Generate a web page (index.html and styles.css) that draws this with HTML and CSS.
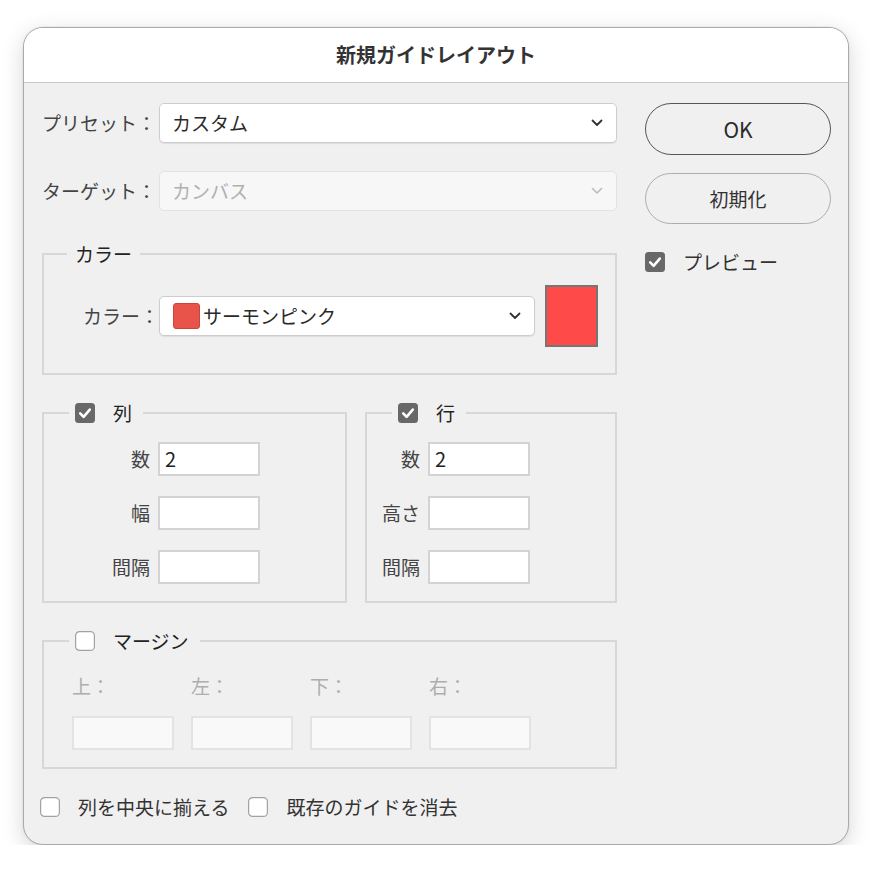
FILE: index.html
```html
<!DOCTYPE html>
<html lang="ja">
<head>
<meta charset="utf-8">
<title>新規ガイドレイアウト</title>
<link rel="stylesheet" href="styles.css">
</head>
<body>
<div class="window">
  <div class="titlebar">新規ガイドレイアウト</div>
  <div class="content">
    <div class="left">
      <div class="row">
        <span class="lbl">プリセット：</span>
        <div class="select">
          <span class="sel-text">カスタム</span>
          <svg class="chev" width="12" height="8" viewBox="0 0 12 8"><path d="M1.5 1.5 L6 6 L10.5 1.5" fill="none" stroke="#333" stroke-width="1.8" stroke-linecap="round" stroke-linejoin="round"/></svg>
        </div>
      </div>
      <div class="row row-target">
        <span class="lbl">ターゲット：</span>
        <div class="select disabled">
          <span class="sel-text">カンバス</span>
          <svg class="chev" width="12" height="8" viewBox="0 0 12 8"><path d="M1.5 1.5 L6 6 L10.5 1.5" fill="none" stroke="#bbb" stroke-width="1.6" stroke-linecap="round" stroke-linejoin="round"/></svg>
        </div>
      </div>

      <fieldset class="group group-color">
        <legend class="legend-text">カラー</legend>
        <div class="color-row">
          <span class="lbl lbl-color">カラー：</span>
          <div class="select select-color">
            <span class="mini-swatch"></span>
            <span class="sel-text">サーモンピンク</span>
            <svg class="chev" width="12" height="8" viewBox="0 0 12 8"><path d="M1.5 1.5 L6 6 L10.5 1.5" fill="none" stroke="#333" stroke-width="1.8" stroke-linecap="round" stroke-linejoin="round"/></svg>
          </div>
          <div class="big-swatch"></div>
        </div>
      </fieldset>

      <div class="pair">
        <fieldset class="group group-cols">
          <legend class="legend-check">
            <svg class="cb" width="20" height="20" viewBox="0 0 20 20"><rect width="20" height="20" rx="3.5" fill="#686868"/><path d="M5.2 10.4 L8.6 13.8 L14.8 6.6" fill="none" stroke="#fff" stroke-width="2.6" stroke-linecap="round" stroke-linejoin="round"/></svg>
            <span>列</span>
          </legend>
          <div class="fields">
            <div class="field"><span class="flbl">数</span><div class="input">2</div></div>
            <div class="field"><span class="flbl">幅</span><div class="input"></div></div>
            <div class="field"><span class="flbl">間隔</span><div class="input"></div></div>
          </div>
        </fieldset>
        <fieldset class="group group-rows">
          <legend class="legend-check">
            <svg class="cb" width="20" height="20" viewBox="0 0 20 20"><rect width="20" height="20" rx="3.5" fill="#686868"/><path d="M5.2 10.4 L8.6 13.8 L14.8 6.6" fill="none" stroke="#fff" stroke-width="2.6" stroke-linecap="round" stroke-linejoin="round"/></svg>
            <span>行</span>
          </legend>
          <div class="fields">
            <div class="field"><span class="flbl">数</span><div class="input">2</div></div>
            <div class="field"><span class="flbl">高さ</span><div class="input"></div></div>
            <div class="field"><span class="flbl">間隔</span><div class="input"></div></div>
          </div>
        </fieldset>
      </div>

      <fieldset class="group group-margin">
        <legend class="legend-check">
          <svg class="cb" width="20" height="20" viewBox="0 0 20 20"><rect x="0.6" y="0.6" width="18.8" height="18.8" rx="4" fill="#fff" stroke="#a2a2a2" stroke-width="1.2"/></svg>
          <span>マージン</span>
        </legend>
        <div class="margin-grid">
          <div class="mcol"><span class="mlbl">上：</span><div class="input input-dis"></div></div>
          <div class="mcol"><span class="mlbl">左：</span><div class="input input-dis"></div></div>
          <div class="mcol"><span class="mlbl">下：</span><div class="input input-dis"></div></div>
          <div class="mcol"><span class="mlbl">右：</span><div class="input input-dis"></div></div>
        </div>
      </fieldset>

      <div class="bottom">
        <svg class="cb" width="20" height="20" viewBox="0 0 20 20"><rect x="0.6" y="0.6" width="18.8" height="18.8" rx="4" fill="#fff" stroke="#a2a2a2" stroke-width="1.2"/></svg>
        <span class="blbl">列を中央に揃える</span>
        <svg class="cb cb-second" width="20" height="20" viewBox="0 0 20 20"><rect x="0.6" y="0.6" width="18.8" height="18.8" rx="4" fill="#fff" stroke="#a2a2a2" stroke-width="1.2"/></svg>
        <span class="blbl">既存のガイドを消去</span>
      </div>
    </div>

    <div class="right">
      <div class="btn btn-ok">OK</div>
      <div class="btn btn-reset">初期化</div>
      <div class="preview">
        <svg class="cb" width="20" height="20" viewBox="0 0 20 20"><rect width="20" height="20" rx="3.5" fill="#686868"/><path d="M5.2 10.4 L8.6 13.8 L14.8 6.6" fill="none" stroke="#fff" stroke-width="2.6" stroke-linecap="round" stroke-linejoin="round"/></svg>
        <span class="plbl">プレビュー</span>
      </div>
    </div>
  </div>
</div>
</body>
</html>
```
FILE: styles.css
```css
* { box-sizing: border-box; }
html, body {
  margin: 0;
  padding: 0;
  background: #ffffff;
}
body {
  font-family: "Noto Sans CJK JP", "Noto Sans", sans-serif;
  color: #3a3a3a;
  font-size: 19px;
}
.window {
  margin: 27px 0 0 23px;
  width: 826px;
  height: 818px;
  border: 1px solid #a9a9a9;
  border-radius: 20px;
  background: #f0f0f0;
  overflow: hidden;
  box-shadow: 0 6px 22px rgba(0, 0, 0, 0.16), 0 0 2px rgba(0,0,0,0.12);
}
.titlebar {
  height: 55px;
  background: #ffffff;
  border-bottom: 1px solid #c9c9c9;
  display: flex;
  align-items: center;
  justify-content: center;
  font-weight: 700;
  font-size: 20px;
  color: #333;
  padding-bottom: 2px;
}
.content {
  display: flex;
  padding: 20px 0 0 18px;
}
.left {
  width: 575px;
  display: flex;
  flex-direction: column;
}
.right {
  width: 186px;
  margin-left: 28px;
  display: flex;
  flex-direction: column;
}
.row {
  display: flex;
  align-items: center;
  height: 40px;
}
.row-target { margin-top: 28px; }
.lbl {
  width: 117px;
  flex: none;
  line-height: 24px;
  color: #444;
  white-space: nowrap;
}
.select {
  flex: 1;
  height: 40px;
  background: #ffffff;
  border: 1px solid #cdcdcd;
  border-radius: 5px;
  box-shadow: 0 1px 1px rgba(0,0,0,0.08);
  display: flex;
  align-items: center;
  padding: 0 13px 0 12px;
  color: #2a2a2a;
}
.select.disabled {
  background: #f7f7f7;
  border-color: #e2e2e2;
  color: #b0b0b0;
  box-shadow: none;
}
.sel-text { flex: 1; line-height: 24px; }
.chev { flex: none; }

.group {
  margin: 0;
  padding: 0;
  border: 2px solid #d7d7d7;
  min-width: 0;
}
.group legend {
  margin-left: 23px;
  line-height: 24px;
  height: 24px;
  padding: 0 8px;
  color: #222;
}
.legend-check {
  display: flex;
  align-items: center;
  gap: 18px;
  padding: 0 11px 0 6px !important;
  margin-left: 25px !important;
}
.cb { display: block; flex: none; }

.group-color { margin-top: 31px; }
.color-row {
  display: flex;
  align-items: center;
  padding: 19px 17px 26px 0;
}
.lbl-color {
  width: 115px;
  text-align: right;
  padding-right: 0;
}
.select-color {
  flex: none;
  width: 376px;
  padding-left: 13px;
}
.mini-swatch {
  width: 27px;
  height: 26px;
  background: #e9544a;
  border: 1px solid #c8463d;
  border-radius: 3px;
  margin-right: 3px;
  flex: none;
}
.big-swatch {
  margin-left: 10px;
  width: 55px;
  height: 62px;
  background: #ff4a4a;
  border: 2px solid #767676;
}

.pair {
  display: flex;
  gap: 18px;
  margin-top: 26px;
}
.group-cols { width: 305px; }
.group-rows { width: 252px; }
.fields {
  display: flex;
  flex-direction: column;
  gap: 20px;
  padding: 17px 0 17px 0;
}
.field {
  display: flex;
  align-items: center;
  gap: 8px;
}
.flbl {
  text-align: right;
  line-height: 24px;
  color: #444;
}
.group-cols .flbl { width: 106px; }
.group-rows .flbl { width: 53px; }
.input {
  width: 102px;
  height: 34px;
  background: #ffffff;
  border: 2px solid #d3d3d3;
  line-height: 30px;
  padding-left: 5px;
  font-size: 20px;
  color: #222;
}
.input-dis {
  background: #f9f9f9;
  border-color: #e3e3e3;
}

.group-margin { margin-top: 26px; }
.margin-grid {
  display: flex;
  gap: 17px;
  padding: 21px 0 17px 28px;
}
.mcol {
  display: flex;
  flex-direction: column;
  gap: 18px;
}
.mlbl {
  line-height: 24px;
  color: #adadad;
}

.bottom {
  display: flex;
  align-items: center;
  margin-top: 26px;
  margin-left: -2px;
  height: 24px;
}
.blbl {
  margin-left: 18px;
  line-height: 24px;
  color: #333;
}
.cb-second { margin-left: 19px; }

.btn {
  height: 52px;
  border-radius: 26px;
  display: flex;
  align-items: center;
  justify-content: center;
  background: #f0f0f0;
}
.btn-ok {
  border: 1.5px solid #555;
  font-size: 21px;
  color: #2a2a2a;
}
.btn-reset {
  margin-top: 18px;
  height: 51px;
  border: 1.5px solid #adadad;
  font-size: 19px;
  color: #333;
}
.preview {
  display: flex;
  align-items: center;
  margin-top: 27px;
  height: 22px;
}
.plbl {
  margin-left: 18px;
  line-height: 24px;
  color: #333;
}
```
